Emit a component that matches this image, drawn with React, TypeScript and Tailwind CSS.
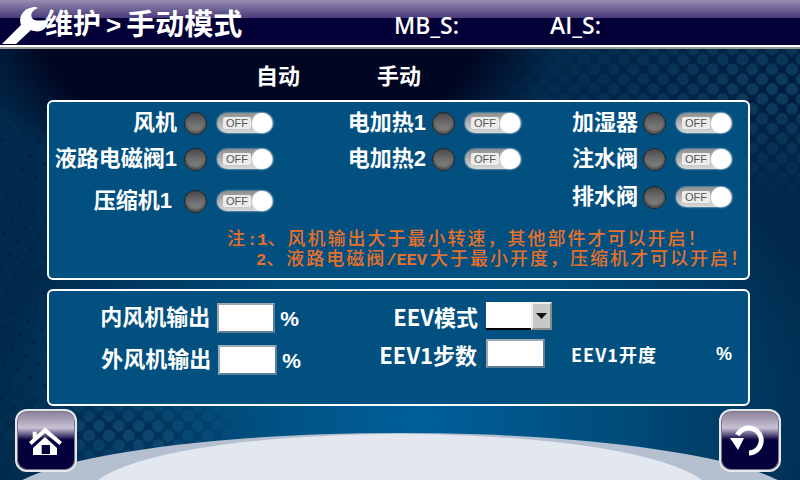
import React from 'react';

const Backdrop: React.FC = () => (
  <svg className="absolute inset-0" width="800" height="480" viewBox="0 0 800 480">
    <defs>
      <radialGradient id="base" gradientUnits="userSpaceOnUse" cx="0" cy="0" r="1" gradientTransform="translate(420 420) scale(430 330)">
        <stop offset="0" stopColor="#00609a" />
        <stop offset="0.5" stopColor="#004a78" />
        <stop offset="1" stopColor="#012a4c" />
      </radialGradient>
      <radialGradient id="shade" gradientUnits="userSpaceOnUse" cx="0" cy="0" r="1" gradientTransform="translate(260 30) scale(300 170)">
        <stop offset="0" stopColor="#010722" />
        <stop offset="0.72" stopColor="#010722" />
        <stop offset="1" stopColor="#010722" stopOpacity="0" />
      </radialGradient>
      <pattern id="dots" width="14" height="14" patternUnits="userSpaceOnUse" patternTransform="rotate(45 0 0)">
        <rect width="14" height="14" fill="#000a28" opacity="0.4" />
        <circle cx="7" cy="7" r="6" fill="#3a8ab8" opacity="0.3" />
      </pattern>
      <pattern id="specks" width="16" height="16" patternUnits="userSpaceOnUse" patternTransform="rotate(30 0 0)">
        <circle cx="8" cy="8" r="1.6" fill="#001a38" opacity="0.7" />
      </pattern>
      <radialGradient id="fadeA" gradientUnits="userSpaceOnUse" cx="0" cy="0" r="1" gradientTransform="translate(800 90) scale(300 110)">
        <stop offset="0" stopColor="#fff" stopOpacity="0.9" />
        <stop offset="1" stopColor="#fff" stopOpacity="0" />
      </radialGradient>
      <radialGradient id="fadeB" gradientUnits="userSpaceOnUse" cx="0" cy="0" r="1" gradientTransform="translate(120 430) scale(140 40)">
        <stop offset="0" stopColor="#fff" stopOpacity="0.9" />
        <stop offset="1" stopColor="#fff" stopOpacity="0" />
      </radialGradient>
      <mask id="maskA"><rect width="800" height="480" fill="url(#fadeA)" /></mask>
      <mask id="maskB"><rect width="800" height="480" fill="url(#fadeB)" /></mask>
    </defs>
    <rect width="800" height="480" fill="url(#base)" />
    <rect width="800" height="240" fill="url(#shade)" />
    <rect x="0" y="80" width="47" height="340" fill="url(#specks)" />
    <rect width="800" height="480" fill="url(#dots)" mask="url(#maskA)" />
    <rect width="800" height="480" fill="url(#dots)" mask="url(#maskB)" />
    <ellipse cx="400" cy="503" rx="400" ry="70" fill="#b4c0d0" />
    <ellipse cx="400" cy="494" rx="310" ry="60" fill="#e2e7f0" />
  </svg>
);

const Wrench: React.FC = () => (
  <svg width="50" height="40" viewBox="0 0 50 40" className="absolute left-[1px] top-[6px]">
    <path
      fill="#fff"
      d="M1 38 L20 19 C17 10 23 1 35 1 L37 2 C32 4 29 7 31 12 C33 15 37 15 46 14 L47 16 C46 23 39 28 30 24 L15 38 Z"
    />
  </svg>
);

const Toggle: React.FC = () => (
  <div className="relative w-[56px] h-[20px] rounded-full bg-gradient-to-b from-[#8f8f8f] to-[#d8d8d8] shadow-[0_0_2px_#ffffff]">
    <div className="absolute left-[6px] top-[4px] w-[28px] h-[12px] flex items-center justify-center rounded-[2px] bg-[#ececec] text-[11px] leading-none text-[#555] font-['Liberation_Sans',sans-serif]">
      OFF
    </div>
    <div className="absolute right-[1px] top-0 w-[20px] h-[20px] rounded-full bg-white shadow-[0_0_2px_#ffffff]" />
  </div>
);

const Led: React.FC = () => (
  <div className="w-[23px] h-[23px] rounded-full bg-gradient-to-b from-[#4a4a4a] via-[#6e6e6e] to-[#888888] border border-[#222] shadow-[inset_0_-2px_3px_#444]" />
);

const SwitchRow: React.FC<{ label: string; gap: string; mt?: string }> = ({ label, gap, mt = '' }) => (
  <div className={`flex items-center justify-end h-[24px] ${mt}`}>
    <span className="text-[22px] leading-none font-bold text-white whitespace-nowrap">{label}</span>
    <div className={gap}><Led /></div>
    <div className="ml-[10px]"><Toggle /></div>
  </div>
);

const NumBox: React.FC<{ w: string; h: string }> = ({ w, h }) => (
  <div className={`${w} ${h} bg-white border-2 border-t-[#9aa8b4] border-l-[#9aa8b4] border-r-[#5d7f98] border-b-[#5d7f98]`} />
);

const Ascii: React.FC<{ children: React.ReactNode; extra?: string }> = ({ children, extra = '' }) => (
  <span className={`text-[17px] tracking-normal font-bold ${extra}`}>{children}</span>
);

const GlossButton: React.FC<{ children: React.ReactNode }> = ({ children }) => (
  <div className="relative w-[62px] h-[63px] rounded-[12px] border-2 border-[#e8e8ec] overflow-hidden shadow-[inset_0_0_0_1px_#77778a] bg-[linear-gradient(#8a8098_0px,#c8c0d4_17px,#5a5080_24px,#04003c_29px)]">
    {children}
  </div>
);

export default function App() {
  return (
    <div className="relative w-[800px] h-[480px] overflow-hidden bg-[#012a4e] text-white font-['Liberation_Sans','Noto_Sans_CJK_SC',sans-serif]">
      <Backdrop />

      <div className="relative flex flex-col h-full">
        {/* title bar */}
        <header className="relative h-[49px] shrink-0 border-b-[2px] border-[#9a9a9a] bg-[#030038]">
          <div className="h-[18px] bg-gradient-to-b from-[#9a8cb0] to-[#4a3b7a]" />
          <div className="absolute inset-x-0 top-[45px] h-[2px] bg-white" />
          <Wrench />
          <div className="absolute left-[45px] top-[5px] flex items-center h-[40px]">
            <span className="text-[28px] leading-none font-bold">维护</span>
            <span className="text-[26px] leading-none font-bold mx-[5px]">&gt;</span>
            <span className="text-[29px] leading-none font-bold">手动模式</span>
          </div>
          <span className="absolute left-[394px] top-[12px] text-[23px] leading-[26px] font-semibold font-['Open_Sans',sans-serif]">MB_S:</span>
          <span className="absolute left-[550px] top-[12px] text-[23px] leading-[26px] font-semibold font-['Open_Sans',sans-serif]">AI_S:</span>
        </header>

        {/* auto / manual headings */}
        <div className="h-[51px] shrink-0 pl-[256px] flex items-center gap-[77px] pt-[4px]">
          <span className="text-[22px] leading-none font-bold">自动</span>
          <span className="text-[22px] leading-none font-bold">手动</span>
        </div>

        {/* switches */}
        <section className="ml-[47px] mr-[50px] h-[180px] shrink-0 rounded-[6px] border-2 border-white bg-[#01507f]">
          <div className="flex pt-[9px]">
            <div className="w-[224px]">
              <SwitchRow label="风机" gap="ml-[7px]" />
              <SwitchRow label="液路电磁阀1" gap="ml-[7px]" mt="mt-[12px]" />
              <SwitchRow label="压缩机1" gap="ml-[12px]" mt="mt-[18px]" />
            </div>
            <div className="w-[248px]">
              <SwitchRow label="电加热1" gap="ml-[6px]" />
              <SwitchRow label="电加热2" gap="ml-[6px]" mt="mt-[12px]" />
            </div>
            <div className="w-[211px]">
              <SwitchRow label="加湿器" gap="ml-[5px]" />
              <SwitchRow label="注水阀" gap="ml-[5px]" mt="mt-[12px]" />
              <SwitchRow label="排水阀" gap="ml-[5px]" mt="mt-[14px]" />
            </div>
          </div>
          <div className="mt-[17px] pl-[178px] text-[18px] tracking-[2px] font-medium text-[#e8702a] whitespace-nowrap font-['Liberation_Mono','Noto_Sans_CJK_SC',monospace]">
            <div className="h-[20px] leading-[20px]">注<Ascii>:1</Ascii>、风机输出大于最小转速，其他部件才可以开启！</div>
            <div className="h-[20px] leading-[20px] pl-[29px]"><Ascii>2</Ascii>、液路电磁阀<Ascii extra="mr-[3px]">/EEV</Ascii>大于最小开度，压缩机才可以开启！</div>
          </div>
        </section>

        {/* outputs */}
        <section className="ml-[47px] mr-[50px] mt-[9px] h-[117px] shrink-0 rounded-[6px] border-2 border-white bg-[#01507f] flex pt-[12px]">
          <div className="w-[252px] shrink-0">
            <div className="flex items-center justify-end h-[30px]">
              <span className="text-[22px] leading-none font-bold">内风机输出</span>
              <div className="ml-[7px]"><NumBox w="w-[58px]" h="h-[30px]" /></div>
              <span className="ml-[5px] mr-[2px] text-[21px] leading-none font-bold">%</span>
            </div>
            <div className="flex items-center justify-end h-[30px] mt-[12px]">
              <span className="text-[22px] leading-none font-bold">外风机输出</span>
              <div className="ml-[7px]"><NumBox w="w-[59px]" h="h-[30px]" /></div>
              <span className="ml-[5px] text-[21px] leading-none font-bold">%</span>
            </div>
          </div>
          <div className="flex-1 -mt-[1px] font-['Noto_Sans_CJK_SC',sans-serif]">
            <div className="flex items-center h-[28px]">
              <span className="w-[177px] text-right text-[22px] leading-none font-bold">EEV模式</span>
              <div className="ml-[8px] flex h-[28px]">
                <div className="w-[45px] h-[28px] bg-white border-b-2 border-black" />
                <div className="w-[21px] h-[28px] bg-[#c8c8c8] border-2 border-t-[#eeeeee] border-l-[#eeeeee] border-r-[#8a8a8a] border-b-[#8a8a8a] flex items-center justify-center">
                  <svg width="11" height="6" viewBox="0 0 11 6"><path d="M0 0 H11 L5.5 6 Z" fill="#111" /></svg>
                </div>
              </div>
            </div>
            <div className="flex items-center h-[29px] mt-[9px]">
              <span className="w-[176px] text-right text-[22px] leading-none font-bold">EEV1步数</span>
              <div className="ml-[9px]"><NumBox w="w-[59px]" h="h-[29px]" /></div>
              <span className="ml-[26px] text-[18px] tracking-[1px] leading-none font-bold w-[145px]">EEV1开度</span>
              <span className="text-[18px] leading-none font-bold font-['Liberation_Sans',sans-serif]">%</span>
            </div>
          </div>
        </section>

        {/* bottom buttons */}
        <footer className="flex justify-between pl-[15px] pr-[19px] mt-[3px]">
          <GlossButton>
            <svg width="58" height="59" viewBox="0 0 58 59" className="absolute left-0 top-0">
              <rect x="15.7" y="20.7" width="4" height="7" fill="#fff" />
              <path fill="#fff" d="M28 16.5 L45 31 L42.5 34 L28 22 L14.5 34 L12 31 Z" />
              <path fill="#fff" d="M16 37 L28 26 L40 37 V44 H16 Z" />
              <rect x="24.7" y="34" width="8.3" height="9" fill="#04003c" />
            </svg>
          </GlossButton>
          <GlossButton>
            <svg width="58" height="59" viewBox="0 0 58 59" className="absolute left-0 top-0">
              <path fill="none" stroke="#fff" strokeWidth="5" d="M28 42 A12.5 12.5 0 1 0 16.5 24" />
              <path fill="#fff" d="M9 27 L23 27 L17 39 Z" />
            </svg>
          </GlossButton>
        </footer>
      </div>
    </div>
  );
}
